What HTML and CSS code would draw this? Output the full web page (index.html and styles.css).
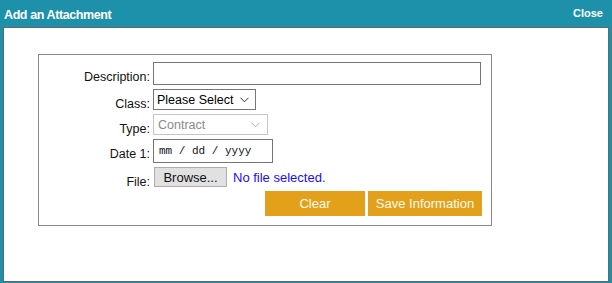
FILE: index.html
```html
<!DOCTYPE html>
<html lang="en">

<head>
  <meta charset="UTF-8">
  <meta name="viewport" content="width=device-width, initial-scale=1.0">
  <title>Add an Attachment</title>
  <link rel="stylesheet" href="styles.css">
</head>

<body>
  <div class="dialog">
    <div class="dialog-header">
      <h1 class="dialog-title">Add an Attachment</h1>
      <a href="#" class="dialog-close">Close</a>
    </div>
    <div class="dialog-body">
      <form class="attach-form">
        <label class="form-label" for="description">Description:</label>
        <div class="form-field">
          <input class="text-input" id="description" type="text">
        </div>

        <label class="form-label" for="class">Class:</label>
        <div class="form-field">
          <div class="select-box">
            <span>Please Select</span>
            <svg width="9" height="6" viewBox="0 0 9 6"><path d="M0.5 0.8 L4.5 4.8 L8.5 0.8" fill="none" stroke="#333" stroke-width="1"/></svg>
          </div>
        </div>

        <label class="form-label">Type:</label>
        <div class="form-field">
          <div class="select-box disabled">
            <span>Contract</span>
            <svg width="9" height="6" viewBox="0 0 9 6"><path d="M0.5 0.8 L4.5 4.8 L8.5 0.8" fill="none" stroke="#aaa" stroke-width="1"/></svg>
          </div>
        </div>

        <label class="form-label" for="date1">Date 1:</label>
        <div class="form-field">
          <div class="date-box" id="date1">mm / dd / yyyy</div>
        </div>

        <label class="form-label">File:</label>
        <div class="form-field file-field">
          <button type="button" class="browse-btn">Browse...</button>
          <span class="file-status">No file selected.</span>
        </div>

        <div class="form-actions">
          <button type="button" class="action-btn clear-btn">Clear</button>
          <button type="button" class="action-btn save-btn">Save Information</button>
        </div>
      </form>
    </div>
  </div>
</body>

</html>
```

FILE: styles.css
```css
* {
  box-sizing: border-box;
}

body {
  margin: 0;
  padding: 0;
  background: #1d91a9;
  font-family: "Liberation Sans", Arial, sans-serif;
}

.dialog {
  width: 612px;
  height: 283px;
}

.dialog-header {
  height: 27px;
  display: flex;
  justify-content: space-between;
  align-items: flex-start;
  padding: 0 9px 0 4px;
  color: #fff;
}

.dialog-title {
  margin: 0;
  padding-top: 8px;
  font-size: 12.5px;
  font-weight: bold;
  letter-spacing: -0.4px;
  line-height: 15px;
}

.dialog-close {
  padding-top: 6px;
  color: #fff;
  text-decoration: none;
  font-size: 11px;
  font-weight: bold;
  line-height: 14px;
}

.dialog-body {
  margin: 0 3px;
  height: 255px;
  background: #fff;
  border: 1px solid #666;
  padding: 26px 0 0 34px;
}

.attach-form {
  width: 454px;
  height: 172px;
  border: 1px solid #8a8a8a;
  padding: 7px 0 0 0;
  display: grid;
  grid-template-columns: 111px 1fr;
  grid-template-rows: 23px 21px 21px 24px 20px 25px;
  column-gap: 3px;
  row-gap: 4px;
}

.form-label {
  text-align: right;
  font-size: 12.5px;
  color: #111;
  padding-top: 8px;
  line-height: 14px;
}

.form-field {
  display: flex;
  align-items: flex-start;
}

.text-input {
  width: 328px;
  height: 23px;
  margin: 0;
  border: 1px solid #767676;
  padding: 0 3px;
  font-family: inherit;
  font-size: 13px;
  outline: none;
}

.select-box {
  width: 103px;
  height: 21px;
  border: 1px solid #767676;
  display: flex;
  align-items: center;
  justify-content: space-between;
  padding: 0 6px 0 3px;
  font-size: 12.5px;
  color: #000;
}

.select-box.disabled {
  width: 115px;
  border-color: #c6c6c6;
  color: #8a8a8a;
  padding: 0 7px 0 4px;
}

.date-box {
  width: 120px;
  height: 24px;
  border: 1px solid #767676;
  padding: 4px 0 0 5px;
  font-family: "Liberation Mono", "Courier New", monospace;
  font-size: 11px;
  line-height: 14px;
  color: #111;
}

.file-field {
  align-items: center;
}

.browse-btn {
  margin: 0 0 0 1px;
  width: 73px;
  height: 20px;
  padding: 0;
  background: #e1e1e1;
  border: 1px solid #adadad;
  font-family: inherit;
  font-size: 13px;
  color: #111;
}

.file-status {
  margin-left: 6px;
  font-size: 13px;
  color: #1a0dff;
}

.form-actions {
  grid-column: 2;
  display: flex;
  gap: 3px;
  padding-left: 112px;
}

.action-btn {
  height: 25px;
  margin: 0;
  padding: 0;
  border: none;
  background: #e3a01a;
  color: #fffbee;
  font-family: inherit;
  font-size: 13px;
}

.clear-btn {
  width: 100px;
}

.save-btn {
  width: 114px;
}
```
